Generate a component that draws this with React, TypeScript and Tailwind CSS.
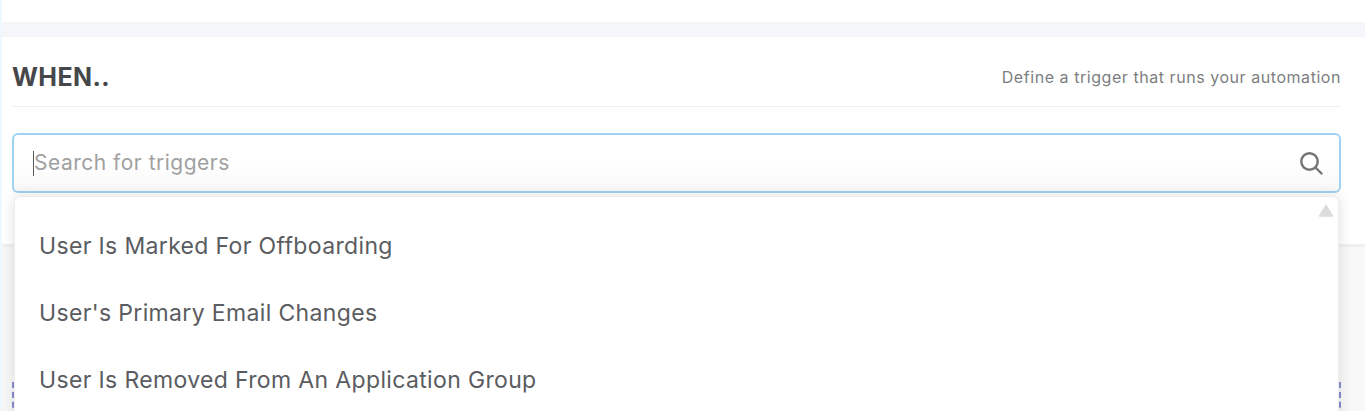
import React from "react";

const items = [
  "User Is Marked For Offboarding",
  "User's Primary Email Changes",
  "User Is Removed From An Application Group",
];

export default function App() {
  return (
    <div className="relative h-[411px] w-full overflow-hidden bg-white font-['Inter',sans-serif] border-l-2 border-[#eef8fe]">
      <div className="h-[22px] bg-white" />
      <div className="h-[15px] bg-[#f4f6fa]" />
      <section className="relative h-[207px] bg-white pl-[10px] pr-[24px]">
        <header className="flex h-[70px] items-center justify-between border-b border-[#f0f0f0] pt-[11px]">
          <h1 className="translate-y-px text-[25px] font-bold tracking-[0.4px] text-[#45474b]">WHEN..</h1>
          <p className="text-[16px] tracking-[0.55px] text-[#7c7e81]">Define a trigger that runs your automation</p>
        </header>
        <div className="mt-[26px] flex h-[60px] items-center justify-between rounded-[6px] border-2 border-[#9fd3f2] bg-gradient-to-b from-white via-white to-[#f8f8f8] pl-[19px] pr-[15px]">
          <div className="flex items-center">
            <span className="h-[25px] w-px bg-[#5a5a5a]" />
            <span className="text-[21px] tracking-[0.5px] text-[#a0a0a0]">Search for triggers</span>
          </div>
          <svg width="26" height="26" viewBox="0 0 26 26" fill="none" stroke="#727476" strokeWidth="2.4" strokeLinecap="round">
            <circle cx="11.5" cy="11.5" r="8.2" />
            <path d="M18 18l5.5 5.5" />
          </svg>
        </div>
      </section>
      <div className="h-full border-t-[3px] border-[#f0f0f1] bg-[#f8f8f9] pl-[10px] pr-[24px] pt-[135px]">
        <div className="h-full border-x-2 border-dashed border-[#8a8fd0]" />
      </div>
      <div className="absolute left-[12px] top-[196px] h-[240px] w-[1325px] rounded-[6px] border border-[#eeeeee] bg-white shadow-[0_0_14px_rgba(0,0,0,0.13)]">
        <svg className="absolute right-[4px] top-[7px]" width="16" height="13" viewBox="0 0 16 13">
          <path d="M8 1.5L14.5 12H1.5Z" fill="#dcdcdc" stroke="#dcdcdc" strokeLinejoin="round" strokeWidth="1.5" />
        </svg>
        <ul className="pl-[24px] pt-[16px]">
          {items.map((t) => (
            <li key={t} className="flex h-[67px] items-center text-[23px] tracking-[0.35px] text-[#5a5c5f]">
              {t}
            </li>
          ))}
        </ul>
      </div>
    </div>
  );
}
